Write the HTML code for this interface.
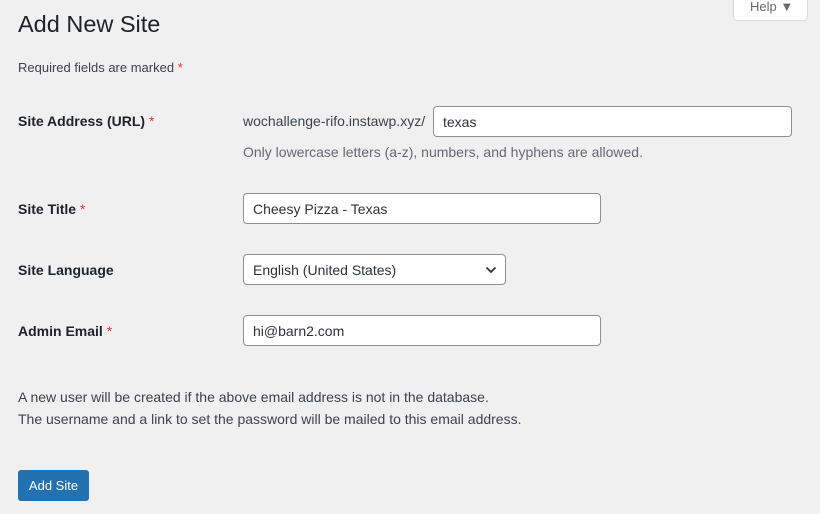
<!DOCTYPE html>
<html><head><style>
body{margin:0;width:820px;height:514px;background:#f0f0f1;font-family:"Liberation Sans",sans-serif;color:#3c434a;position:relative;overflow:hidden;font-size:14px}
.a{position:absolute;white-space:nowrap}
.lbl{font-weight:bold;color:#1d2327;font-size:14px}
.req{color:#d63638;font-weight:normal}
.in{position:absolute;background:#fff;border:1px solid #8c8f94;border-radius:4px;box-sizing:border-box;padding-left:9px;font-size:14px;color:#2c3338;display:flex;align-items:center}
</style></head><body>
<div class="a" style="left:733px;top:-8px;width:75px;height:29px;background:#fff;border:1px solid #dcdcde;border-radius:0 0 4px 4px;box-sizing:border-box;font-size:13px;color:#646970;padding:6px 0 0 16px">Help ▼</div>
<div class="a" style="left:18px;top:11px;font-size:23.5px;color:#1d2327">Add New Site</div>
<div class="a" style="left:18px;top:60px;font-size:13px;color:#3c434a">Required fields are marked <span class="req">*</span></div>
<div class="a lbl" style="left:18px;top:113px">Site Address (URL) <span class="req">*</span></div>
<div class="a" style="left:243px;top:113px;color:#3c434a">wochallenge-rifo.instawp.xyz/</div>
<div class="in" style="left:433px;top:106px;width:359px;height:31px">texas</div>
<div class="a" style="left:243px;top:144px;color:#646970">Only lowercase letters (a-z), numbers, and hyphens are allowed.</div>
<div class="a lbl" style="left:18px;top:201px">Site Title <span class="req">*</span></div>
<div class="in" style="left:243px;top:193px;width:358px;height:31px">Cheesy Pizza - Texas</div>
<div class="a lbl" style="left:18px;top:262px">Site Language</div>
<div class="in" style="left:243px;top:254px;width:263px;height:31px">English (United States)
<svg style="position:absolute;right:8px;top:10px" width="12" height="10" viewBox="0 0 12 10"><path d="M1.5 2.5L6 7L10.5 2.5" fill="none" stroke="#2c3338" stroke-width="1.8"/></svg></div>
<div class="a lbl" style="left:18px;top:323px">Admin Email <span class="req">*</span></div>
<div class="in" style="left:243px;top:315px;width:358px;height:31px">hi@barn2.com</div>
<div class="a" style="left:18px;top:389px">A new user will be created if the above email address is not in the database.</div>
<div class="a" style="left:18px;top:411px">The username and a link to set the password will be mailed to this email address.</div>
<div class="a" style="left:18px;top:470px;width:71px;height:31px;background:#2271b1;border-radius:3px;color:#fff;font-size:13px;text-align:center;line-height:31px">Add Site</div>
</body></html>
